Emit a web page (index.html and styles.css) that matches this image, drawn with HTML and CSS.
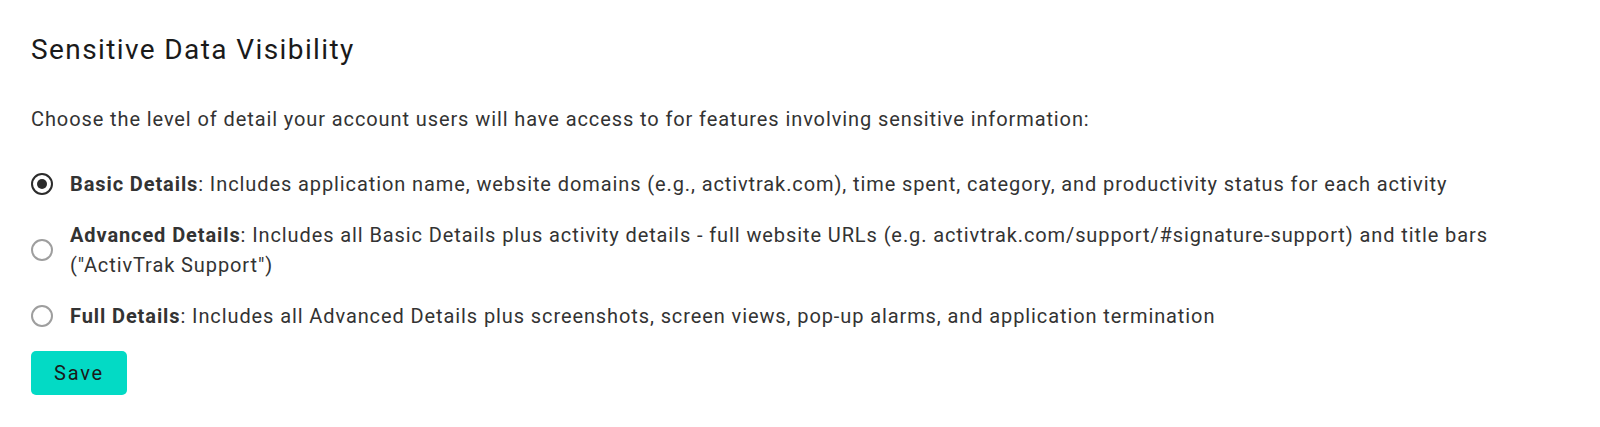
FILE: index.html
```html
<!DOCTYPE html>
<html>
<head>
<meta charset="utf-8">
<link rel="stylesheet" href="styles.css">
</head>
<body>
<div class="page">
  <h1 class="title">Sensitive Data Visibility</h1>
  <p class="intro">Choose the level of detail your account users will have access to for features involving sensitive information:</p>
  <div class="options">
    <label class="option">
      <span class="radio checked"></span>
      <span class="text"><b>Basic Details</b>: Includes application name, website domains (e.g., activtrak.com), time spent, category, and productivity status for each activity</span>
    </label>
    <label class="option">
      <span class="radio"></span>
      <span class="text"><b>Advanced Details</b>: Includes all Basic Details plus activity details - full website URLs (e.g. activtrak.com/support/#signature-support) and title bars ("ActivTrak Support")</span>
    </label>
    <label class="option">
      <span class="radio"></span>
      <span class="text"><b>Full Details</b>: Includes all Advanced Details plus screenshots, screen views, pop-up alarms, and application termination</span>
    </label>
  </div>
  <button class="save">Save</button>
</div>
</body>
</html>
```
FILE: styles.css
```css
body {
  margin: 0;
  background: #ffffff;
  font-family: Roboto, "Liberation Sans", sans-serif;
  color: #333333;
}
.page {
  padding: 32px 31px 0;
  width: 1460px;
}
.title {
  margin: 0;
  font-size: 28px;
  font-weight: 400;
  letter-spacing: 1.4px;
  color: #1a1a1a;
  line-height: 36px;
}
.intro {
  margin: 36px 0 0;
  font-size: 20px;
  letter-spacing: 0.9px;
  line-height: 30px;
}
.options {
  margin-top: 35px;
  display: flex;
  flex-direction: column;
  gap: 21px;
}
.option {
  display: flex;
  align-items: center;
  gap: 17px;
  font-size: 20px;
  letter-spacing: 0.9px;
  line-height: 30px;
}
.text b {
  font-weight: 700;
}
.radio {
  flex: none;
  width: 22px;
  height: 22px;
  box-sizing: border-box;
  border: 2px solid #9e9e9e;
  border-radius: 50%;
  display: flex;
  align-items: center;
  justify-content: center;
}
.radio.checked {
  border-color: #2b2b2b;
}
.radio.checked::after {
  content: "";
  width: 10px;
  height: 10px;
  border-radius: 50%;
  background: #2b2b2b;
}
.save {
  display: block;
  margin-top: 20px;
  background: #03dac5;
  border: none;
  border-radius: 5px;
  width: 96px;
  height: 44px;
  font-family: Roboto, "Liberation Sans", sans-serif;
  font-size: 20px;
  letter-spacing: 1.8px;
  color: #1a1a1a;
  padding: 0;
}
```
